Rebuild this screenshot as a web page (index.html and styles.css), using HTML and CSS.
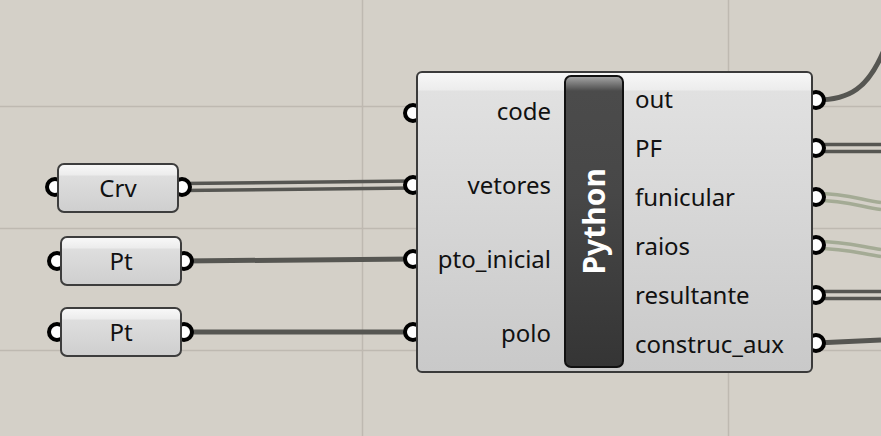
FILE: index.html
```html
<!DOCTYPE html>
<html lang="en">

<head>
    <meta charset="UTF-8">
    <meta name="viewport" content="width=device-width, initial-scale=1.0">
    <title>Python component</title>
    <link rel="stylesheet" href="styles.css">
</head>

<body>
    <div class="canvas">
        <svg class="wires" width="881" height="436" viewBox="0 0 881 436">
            <g class="grid">
                <line x1="0" y1="106.5" x2="881" y2="106.5" />
                <line x1="0" y1="228.5" x2="881" y2="228.5" />
                <line x1="0" y1="350.5" x2="881" y2="350.5" />
                <line x1="362.5" y1="0" x2="362.5" y2="436" />
                <line x1="728.5" y1="0" x2="728.5" y2="436" />
            </g>

            <!-- inputs -->
            <g class="wire list">
                <path d="M182,183.5 L413,181" />
                <path d="M182,190.5 L413,188" />
            </g>
            <path class="wire item" d="M183,261 L413,259" />
            <path class="wire item" d="M183,332 L413,332" />

            <!-- outputs -->
            <path class="wire item" d="M816,100 C850,100 868,88 884,50" />
            <g class="wire list">
                <path d="M816,144.5 L881,144.5" />
                <path d="M816,151.5 L881,151.5" />
            </g>
            <g class="wire list green">
                <path d="M816,193.5 C845,193.5 860,199.5 881,202.5" />
                <path d="M816,200.5 C845,200.5 860,206.5 881,209.5" />
            </g>
            <g class="wire list green">
                <path d="M816,241.5 C845,241.5 860,246.5 881,249.5" />
                <path d="M816,248.5 C845,248.5 860,253.5 881,256.5" />
            </g>
            <g class="wire list">
                <path d="M816,291.5 L881,291.5" />
                <path d="M816,298.5 L881,298.5" />
            </g>
            <path class="wire item" d="M816,343 L881,340" />

            <g class="ports">
                <circle cx="55" cy="187" r="8" />
                <circle cx="182" cy="187" r="8" />
                <circle cx="57" cy="261" r="8" />
                <circle cx="184" cy="261" r="8" />
                <circle cx="57" cy="332" r="8" />
                <circle cx="184" cy="332" r="8" />

                <circle cx="413" cy="113" r="8" />
                <circle cx="413" cy="185" r="8" />
                <circle cx="413" cy="259" r="8" />
                <circle cx="413" cy="332" r="8" />

                <circle cx="816" cy="100" r="8" />
                <circle cx="816" cy="148" r="8" />
                <circle cx="816" cy="197" r="8" />
                <circle cx="816" cy="245" r="8" />
                <circle cx="816" cy="295" r="8" />
                <circle cx="816" cy="343" r="8" />
            </g>
        </svg>

        <div class="param param-crv">Crv</div>
        <div class="param param-pt1">Pt</div>
        <div class="param param-pt2">Pt</div>

        <div class="comp">
            <div class="inputs">
                <span>code</span>
                <span>vetores</span>
                <span>pto_inicial</span>
                <span>polo</span>
            </div>
            <div class="nick"><span>Python</span></div>
            <div class="outputs">
                <span>out</span>
                <span>PF</span>
                <span>funicular</span>
                <span>raios</span>
                <span>resultante</span>
                <span>construc_aux</span>
            </div>
        </div>
    </div>
</body>

</html>
```

FILE: styles.css
```css
body {
    margin: 0;
    background-color: #d4d0c8;
    font-family: 'Noto Sans', 'Open Sans', sans-serif;
    color: #111;
    overflow: hidden;
}

.canvas {
    position: relative;
    width: 881px;
    height: 436px;
}

.wires {
    position: absolute;
    left: 0;
    top: 0;
}

.grid line {
    stroke: #beb9b1;
    stroke-width: 1.5;
}

.wire,
.wire path {
    fill: none;
    stroke: #565652;
}

.wire.item {
    stroke-width: 5;
}

.wire.list path {
    stroke-width: 3.5;
}

.wire.green path {
    stroke: #a4ab95;
}

.ports circle {
    fill: #fff;
    stroke: #000;
    stroke-width: 4;
}

/* small parameter nodes */
.param {
    position: absolute;
    box-sizing: border-box;
    width: 122px;
    height: 50px;
    border: 2px solid #3d3d3d;
    border-radius: 7px;
    background: linear-gradient(#f8f8f8, #ececec 10px, #dedede 11px, #cfcfcf);
    display: flex;
    align-items: center;
    justify-content: center;
    font-size: 24px;
    padding-bottom: 2px;
}

.param-crv {
    left: 57px;
    top: 163px;
}

.param-pt1 {
    left: 60px;
    top: 236px;
}

.param-pt2 {
    left: 60px;
    top: 307px;
}

/* python component */
.comp {
    position: absolute;
    left: 416px;
    top: 71px;
    box-sizing: border-box;
    width: 397px;
    height: 302px;
    border: 2px solid #3a3a3a;
    border-radius: 6px;
    background: linear-gradient(#f7f7f7, #ececec 17px, #e1e1e1 18px, #c9c9c9);
    display: grid;
    grid-template-columns: 146px 60px 187px;
    font-size: 24px;
}

.inputs,
.outputs {
    display: flex;
    flex-direction: column;
}

.inputs {
    padding: 1px 13px 0 0;
    align-items: flex-end;
}

.inputs span {
    height: 74px;
    line-height: 74px;
}

.outputs {
    padding: 1px 0 0 11px;
    align-items: flex-start;
}

.outputs span {
    height: 49px;
    line-height: 49px;
}

.nick {
    margin: 2px 0 3px;
    border: 2px solid #111;
    border-radius: 7px;
    background: linear-gradient(#a2a2a2, #4b4b4b 14px, #474747 40%, #353535);
    display: flex;
    align-items: center;
    justify-content: center;
}

.nick span {
    writing-mode: vertical-rl;
    transform: rotate(180deg);
    color: #fff;
    font-weight: 700;
    font-size: 30px;
    line-height: 1;
}
```
